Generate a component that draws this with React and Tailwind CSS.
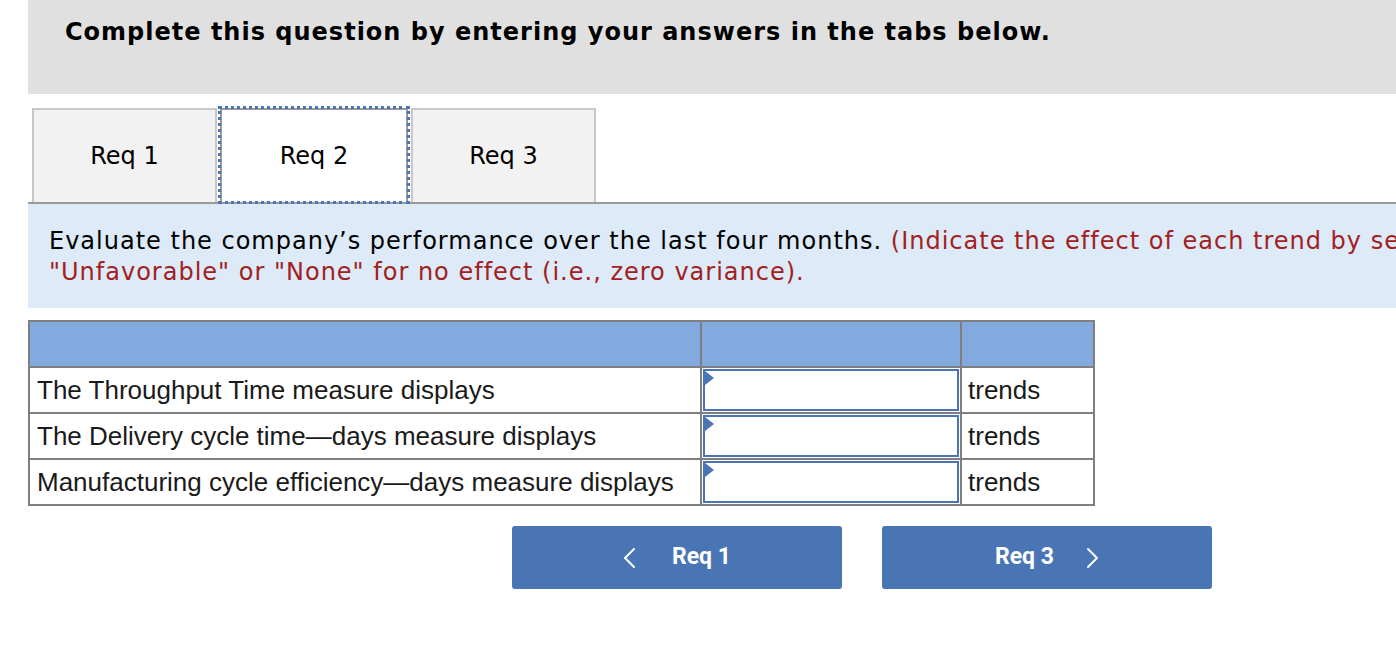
import React from 'react';

const rows = [
  'The Throughput Time measure displays',
  'The Delivery cycle time\u2014days measure displays',
  'Manufacturing cycle efficiency\u2014days measure displays',
];

function Tab({ label, active }) {
  if (active) {
    return (
      <div className="relative h-[94px] w-[188px] bg-white outline-[3px] outline-dotted outline-[#4a76b8] -outline-offset-1 border-2 border-b-0 border-[#9a9a9a] flex items-center justify-center text-[24px] text-black">
        {label}
      </div>
    );
  }
  return (
    <div className="h-[94px] w-[185px] bg-[#f2f2f2] border-2 border-b-0 border-[#c8c8c8] flex items-center justify-center text-[24px] text-black">
      {label}
    </div>
  );
}

function Chevron({ dir }) {
  return (
    <svg width="13" height="22" viewBox="0 0 13 22" fill="none" stroke="white" strokeWidth="2" strokeLinecap="round" strokeLinejoin="round">
      {dir === 'left' ? <path d="M11 2 L2 11 L11 20" /> : <path d="M2 2 L11 11 L2 20" />}
    </svg>
  );
}

export default function App() {
  return (
    <div className="w-[1396px] h-[650px] overflow-hidden bg-white" style={{ fontFamily: '"DejaVu Sans", Verdana, sans-serif' }}>
      <div className="ml-[28px] w-[1400px]">
        <div className="h-[94px] bg-[#e0e0e0] pl-[37px] pt-[14px]">
          <h1 className="text-[24px] tracking-[1px] font-bold text-black whitespace-nowrap">
            Complete this question by entering your answers in the tabs below.
          </h1>
        </div>

        <div className="mt-[14px] pl-[4px] flex gap-[3px] border-b-2 border-[#9a9a9a]">
          <Tab label="Req 1" />
          <Tab label="Req 2" active />
          <Tab label="Req 3" />
        </div>

        <div className="h-[104px] bg-[#ddeaf7] pl-[21px] pt-[22px] text-[24px] tracking-[1px] leading-[31px] whitespace-nowrap">
          <p>
            <span className="text-black">Evaluate the company&rsquo;s performance over the last four months. </span>
            <span className="text-[#a3201e]">(Indicate the effect of each trend by selecting "Favorable",</span>
          </p>
          <p className="text-[#a3201e]">"Unfavorable" or "None" for no effect (i.e., zero variance).</p>
        </div>

        <table className="mt-[12px] border-collapse" style={{ fontFamily: '"Liberation Sans", Arial, sans-serif' }}>
          <tbody>
            <tr className="h-[46px] bg-[#83aadf]">
              <td className="w-[672px] border-2 border-[#7f7f7f]"></td>
              <td className="w-[260px] border-2 border-[#7f7f7f]"></td>
              <td className="w-[133px] border-2 border-[#7f7f7f]"></td>
            </tr>
            {rows.map((r) => (
              <tr key={r} className="h-[46px]">
                <td className="border-2 border-[#7f7f7f] pl-[7px] text-[26px] text-[#1a1a1a] whitespace-nowrap">{r}</td>
                <td className="border-2 border-[#7f7f7f] p-0">
                  <div className="relative h-[42px] mx-[1px] border-2 border-[#4a74b3] bg-white">
                    <svg className="absolute left-0 top-0" width="10" height="14" viewBox="0 0 10 14">
                      <path d="M0 0 L9 7 L0 14 Z" fill="#4a74b3" />
                    </svg>
                  </div>
                </td>
                <td className="border-2 border-[#7f7f7f] pl-[6px] text-[26px] text-[#1a1a1a]">trends</td>
              </tr>
            ))}
          </tbody>
        </table>

        <div className="mt-[20px] ml-[484px] flex gap-[40px]" style={{ fontFamily: 'Roboto, "Liberation Sans", sans-serif' }}>
          <button className="w-[330px] h-[63px] bg-[#4a75b4] rounded-[3px] flex items-center justify-center gap-[36px] text-white text-[23px] font-bold">
            <Chevron dir="left" />
            <span>Req 1</span>
          </button>
          <button className="w-[330px] h-[63px] bg-[#4a75b4] rounded-[3px] flex items-center justify-center gap-[32px] text-white text-[23px] font-bold">
            <span>Req 3</span>
            <Chevron dir="right" />
          </button>
        </div>
      </div>
    </div>
  );
}
